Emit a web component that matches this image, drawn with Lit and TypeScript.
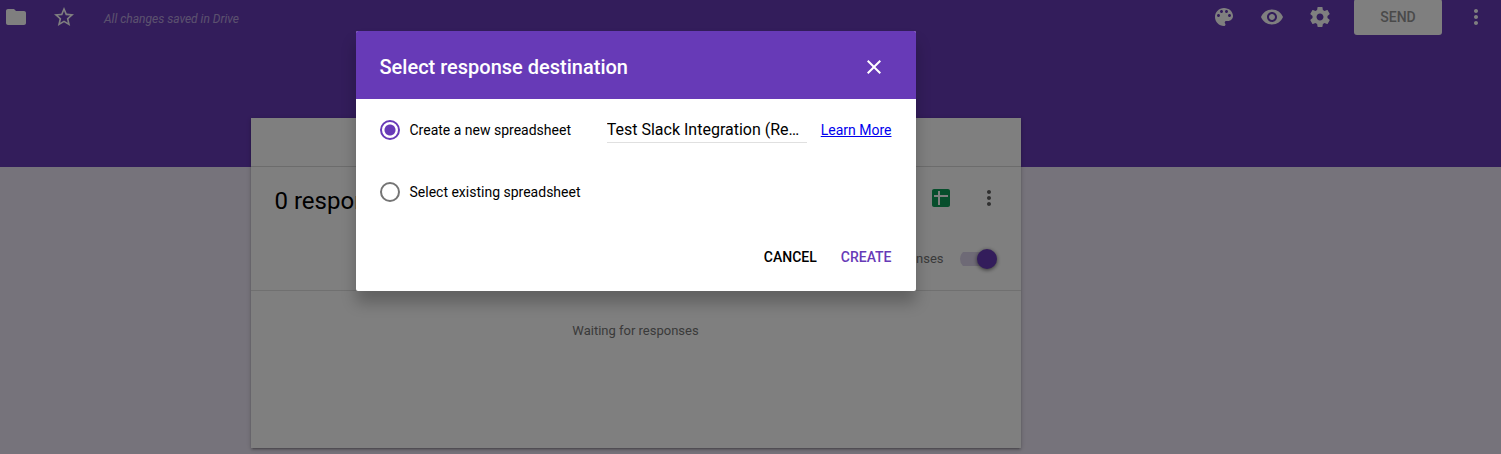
import { LitElement, html, css, svg } from "lit";
import { customElement, property, state } from "lit/decorators.js";

const ICONS: Record<string, string> = {
  folder: "M10 4H4c-1.1 0-2 .9-2 2v12c0 1.1.9 2 2 2h16c1.1 0 2-.9 2-2V8c0-1.1-.9-2-2-2h-8l-2-2z",
  star: "M22 9.24l-7.19-.62L12 2 9.19 8.63 2 9.24l5.46 4.73L5.82 21 12 17.27 18.18 21l-1.63-7.03L22 9.24zM12 15.4l-3.76 2.27 1-4.28-3.32-2.88 4.38-.38L12 6.1l1.71 4.04 4.38.38-3.32 2.88 1 4.28L12 15.4z",
  palette: "M12 3c-4.97 0-9 4.03-9 9s4.03 9 9 9c.83 0 1.5-.67 1.5-1.5 0-.39-.15-.74-.39-1.01-.23-.26-.38-.61-.38-.99 0-.83.67-1.5 1.5-1.5H16c2.76 0 5-2.24 5-5 0-4.42-4.03-8-9-8zm-5.5 9c-.83 0-1.5-.67-1.5-1.5S5.67 9 6.500 9 8 9.670 8 10.500 7.330 12 6.500 12zm3-4C8.670 8 8 7.330 8 6.500S8.670 5 9.500 5s1.500.670 1.500 1.500S10.330 8 9.500 8zm5 0c-.830 0-1.500-.670-1.500-1.500S13.670 5 14.500 5s1.500.670 1.500 1.500S15.330 8 14.500 8zm3 4c-.830 0-1.500-.670-1.500-1.500S16.670 9 17.500 9s1.500.670 1.500 1.500-.670 1.500-1.500 1.500z",
  eye: "M12 4.5C7 4.5 2.730 7.610 1 12c1.730 4.390 6 7.500 11 7.500s9.270-3.110 11-7.500c-1.730-4.390-6-7.500-11-7.500zM12 17c-2.760 0-5-2.240-5-5s2.240-5 5-5 5 2.240 5 5-2.240 5-5 5zm0-8c-1.660 0-3 1.340-3 3s1.340 3 3 3 3-1.340 3-3-1.340-3-3-3z",
  gear: "M19.430 12.980c.040-.320.070-.640.070-.980s-.030-.660-.070-.980l2.110-1.650c.190-.150.240-.420.120-.640l-2-3.460c-.120-.220-.390-.300-.610-.220l-2.490 1c-.520-.400-1.080-.730-1.690-.980l-.380-2.650C14.460 2.180 14.250 2 14 2h-4c-.250 0-.460.180-.490.420l-.380 2.650c-.610.250-1.170.590-1.690.980l-2.490-1c-.230-.090-.490 0-.610.220l-2 3.460c-.130.220-.070.490.120.640l2.110 1.650c-.040.320-.070.650-.070.980s.030.660.070.980l-2.110 1.650c-.190.150-.240.420-.120.640l2 3.460c.120.220.390.300.610.220l2.490-1c.520.400 1.080.730 1.690.980l.380 2.650c.030.240.240.420.490.420h4c.250 0 .460-.180.490-.420l.380-2.650c.610-.250 1.170-.590 1.690-.980l2.490 1c.230.090.490 0 .610-.220l2-3.460c.120-.220.070-.490-.120-.640l-2.110-1.650zM12 15.500c-1.930 0-3.500-1.570-3.500-3.500s1.570-3.500 3.500-3.500 3.500 1.570 3.500 3.500-1.570 3.500-3.500 3.500z",
  more: "M12 8c1.100 0 2-.900 2-2s-.900-2-2-2-2 .900-2 2 .900 2 2 2zm0 2c-1.100 0-2 .900-2 2s.900 2 2 2 2-.900 2-2-.900-2-2-2zm0 6c-1.100 0-2 .900-2 2s.900 2 2 2 2-.900 2-2-.900-2-2-2z",
  close: "M19 6.410L17.590 5 12 10.590 6.410 5 5 6.410 10.590 12 5 17.590 6.410 19 12 13.410 17.590 19 19 17.590 13.410 12z",
  sheet: "M5 3h14c1.100 0 2 .900 2 2v14c0 1.100-.900 2-2 2H5c-1.100 0-2-.900-2-2V5c0-1.100.900-2 2-2zM9 5v4H5v2h4v8h2v-8h8V9h-8V5z",
};

@customElement("icon-button")
class IconButton extends LitElement {
  @property() icon = "";
  @property() label = "";

  static styles = css`
    :host {
      display: block;
      width: 24px;
      height: 24px;
    }
    .button {
      display: block;
      width: 24px;
      height: 24px;
      padding: 0;
      border: 0;
      background: none;
      color: inherit;
      cursor: pointer;
    }
    .glyph {
      display: block;
      width: 24px;
      height: 24px;
      fill: currentColor;
    }
  `;

  render() {
    return html`<button class="button" type="button" aria-label=${this.label}>
      <svg class="glyph" viewBox="0 0 24 24" aria-hidden="true">
        ${svg`<path fill-rule="evenodd" d=${ICONS[this.icon]}></path>`}
      </svg>
    </button>`;
  }
}

@customElement("form-toolbar")
class FormToolbar extends LitElement {
  static styles = css`
    :host {
      display: flex;
      align-items: center;
      gap: 24px;
      height: 34px;
      padding: 0 13px 0 4px;
      color: #fff;
    }
    .status {
      margin: 0 auto 0 4px;
      padding-top: 3px;
      font-size: 12px;
      line-height: 16px;
      font-style: italic;
      color: rgba(255, 255, 255, 0.54);
    }
    .send {
      flex: none;
      width: 88px;
      height: 36px;
      margin: 0 -2px 0 -2px;
      padding: 0;
      border: 0;
      border-radius: 3px;
      background: #fff;
      color: #949494;
      font: 500 14px/20px Roboto, sans-serif;
    }
  `;

  render() {
    return html`
      <icon-button icon="folder" label="Move to folder"></icon-button>
      <icon-button icon="star" label="Star"></icon-button>
      <p class="status">All changes saved in Drive</p>
      <icon-button icon="palette" label="Color palette"></icon-button>
      <icon-button icon="eye" label="Preview"></icon-button>
      <icon-button icon="gear" label="Settings"></icon-button>
      <button class="send" type="button">SEND</button>
      <icon-button icon="more" label="More"></icon-button>
    `;
  }
}

@customElement("response-card")
class ResponseCard extends LitElement {
  static styles = css`
    :host {
      display: block;
      min-height: 330px;
      background: #fff;
      box-shadow: 0 2px 2px rgba(0, 0, 0, 0.14), 0 3px 1px -2px rgba(0, 0, 0, 0.12),
        0 1px 5px rgba(0, 0, 0, 0.2);
    }
    .tabs {
      height: 48px;
      border-bottom: 1px solid #d8d8d8;
    }
    .summary {
      padding: 19px 20px 21px 24px;
      border-bottom: 1px solid #e0e0e0;
    }
    .row {
      display: flex;
      align-items: flex-start;
      gap: 24px;
    }
    .title {
      margin: 0 auto 0 0;
      font-size: 24px;
      line-height: 30px;
      font-weight: 400;
    }
    .sheet {
      color: #0f9d58;
    }
    .more {
      color: #616161;
    }
    .accepting {
      display: flex;
      align-items: center;
      justify-content: flex-end;
      gap: 16px;
      margin-top: 33px;
      padding-right: 4px;
      font-size: 13px;
      line-height: 20px;
      color: #757575;
    }
    .switch {
      appearance: none;
      display: flex;
      align-items: center;
      justify-content: flex-end;
      width: 37px;
      height: 20px;
      margin: 0;
      background: linear-gradient(#ddd5ec, #ddd5ec) 0 50% / 34px 14px no-repeat;
      border-radius: 10px;
    }
    .switch::after {
      content: "";
      width: 20px;
      height: 20px;
      border-radius: 50%;
      background: #673ab7;
      box-shadow: 0 1px 4px rgba(0, 0, 0, 0.6);
    }
    .waiting {
      margin: 0;
      padding: 30px 0;
      text-align: center;
      font-size: 13px;
      line-height: 20px;
      color: #757575;
    }
  `;

  render() {
    return html`
      <div class="tabs"></div>
      <section class="summary">
        <div class="row">
          <h1 class="title">0 responses</h1>
          <icon-button class="sheet" icon="sheet" label="Create spreadsheet"></icon-button>
          <icon-button class="more" icon="more" label="More options"></icon-button>
        </div>
        <label class="accepting">
          Accepting responses
          <input class="switch" type="checkbox" role="switch" checked />
        </label>
      </section>
      <p class="waiting">Waiting for responses</p>
    `;
  }
}

@customElement("destination-dialog")
class DestinationDialog extends LitElement {
  @state() private choice = "new";

  static styles = css`
    :host {
      display: block;
      width: min(560px, 100%);
      border-radius: 2px;
      overflow: hidden;
      background: #fff;
      color: #000;
      box-shadow: 0 12px 15px rgba(0, 0, 0, 0.24);
    }
    .head {
      display: flex;
      align-items: center;
      justify-content: space-between;
      padding: 24px 30px 20px 24px;
      background: #673ab7;
      color: #fff;
    }
    .title {
      margin: 0;
      font-size: 20px;
      line-height: 24px;
      font-weight: 500;
    }
    .body {
      padding: 15px 24px;
      font-size: 14px;
      line-height: 20px;
    }
    .row {
      display: flex;
      align-items: center;
      justify-content: space-between;
      height: 32px;
      margin-bottom: 30px;
    }
    .option {
      display: flex;
      align-items: center;
      gap: 10px;
    }
    .radio {
      appearance: none;
      box-sizing: border-box;
      width: 20px;
      height: 20px;
      margin: 0;
      border: 2px solid #757575;
      border-radius: 50%;
    }
    .radio:checked {
      border-color: #673ab7;
      background: radial-gradient(circle, #673ab7 5px, transparent 6px);
    }
    .target {
      display: flex;
      align-items: center;
      gap: 14px;
    }
    .name {
      box-sizing: border-box;
      width: 200px;
      height: 26px;
      padding: 0;
      border: 0;
      border-bottom: 1px solid #e0e0e0;
      background: none;
      color: #000;
      font: 16px/24px Roboto, sans-serif;
      text-overflow: ellipsis;
    }
    .link {
      color: #0000ee;
      text-decoration: underline;
    }
    .actions {
      display: flex;
      justify-content: flex-end;
      gap: 24px;
    }
    .action {
      padding: 9px 0;
      border: 0;
      background: none;
      color: #000;
      font: 500 14px/20px Roboto, sans-serif;
    }
    .primary {
      color: #673ab7;
    }
  `;

  private option(value: string, label: string) {
    return html`<label class="option">
      <input
        class="radio"
        type="radio"
        name="destination"
        value=${value}
        .checked=${this.choice === value}
        @change=${() => (this.choice = value)}
      />
      ${label}
    </label>`;
  }

  render() {
    return html`
      <header class="head">
        <h2 class="title">Select response destination</h2>
        <icon-button icon="close" label="Close"></icon-button>
      </header>
      <form class="body">
        <div class="row">
          ${this.option("new", "Create a new spreadsheet")}
          <div class="target">
            <input
              class="name"
              type="text"
              aria-label="Spreadsheet name"
              value="Test Slack Integration (Responses)"
            />
            <a class="link" href="#">Learn More</a>
          </div>
        </div>
        <div class="row">${this.option("existing", "Select existing spreadsheet")}</div>
        <div class="actions">
          <button class="action" type="button">CANCEL</button>
          <button class="action primary" type="button">CREATE</button>
        </div>
      </form>
    `;
  }
}

@customElement("app-root")
class AppRoot extends LitElement {
  static styles = css`
    :host {
      display: block;
      position: relative;
      min-height: 100vh;
      overflow: hidden;
      box-sizing: border-box;
      background: #ede7f6;
      color: #000;
      font-family: Roboto, sans-serif;
    }
    .banner {
      height: 167px;
      background: #673ab7;
    }
    .content {
      display: grid;
      grid-template-columns: minmax(0, 770px);
      justify-content: center;
      margin-top: -49px;
      padding-right: 230px;
    }
    .scrim {
      position: absolute;
      inset: 0;
      display: flex;
      align-items: flex-start;
      justify-content: center;
      padding: 31px 230px 0 0;
      background: rgba(0, 0, 0, 0.5);
    }
  `;

  render() {
    return html`
      <header class="banner"><form-toolbar></form-toolbar></header>
      <main class="content"><response-card></response-card></main>
      <div class="scrim">
        <destination-dialog role="dialog" aria-label="Select response destination"></destination-dialog>
      </div>
    `;
  }
}
